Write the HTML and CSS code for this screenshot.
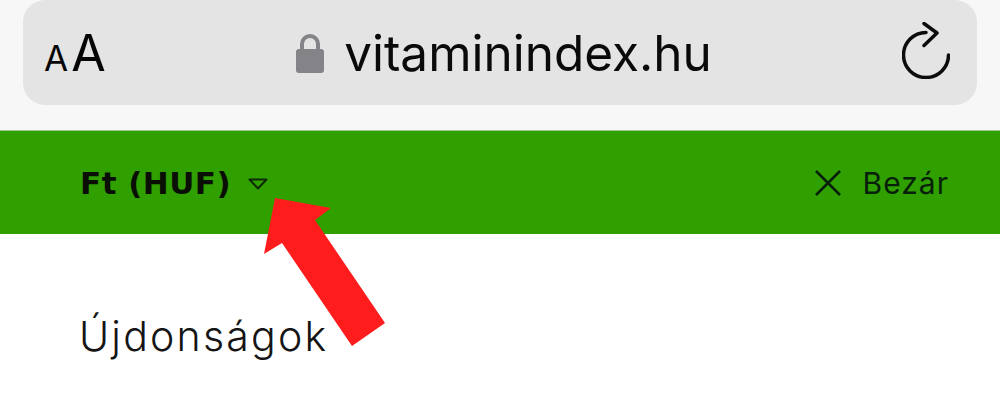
FILE: index.html
```html
<!DOCTYPE html>
<html lang="hu">
<head>
<meta charset="utf-8">
<title>vitaminindex.hu</title>
<link rel="stylesheet" href="styles.css">
</head>
<body>
<header class="browser">
  <div class="address">
    <div class="aa"><span class="aa-small">A</span><span class="aa-big">A</span></div>
    <div class="url">
      <svg class="lock" width="28" height="40" viewBox="0 0 28 40"><path class="lock-shackle" d="M6 18V11a8 8 0 0 1 16 0V18"/><rect class="lock-body" x="0" y="16" width="28" height="24" rx="3"/></svg>
      <span class="url-text">vitaminindex.hu</span>
    </div>
    <svg class="reload" width="48" height="57" viewBox="0 0 48 57"><path class="reload-stroke" d="M24 10.500A22.500 22.500 0 1 0 46.500 33M22 1.500L35 11 22 23.500"/></svg>
  </div>
</header>
<section class="bar">
  <div class="currency">
    <span class="currency-text">Ft (HUF)</span>
    <svg class="caret" width="20" height="12" viewBox="0 0 20 12"><path class="caret-stroke" d="M1.500 1.500H18.500L10 10.500Z"/></svg>
  </div>
  <div class="close">
    <svg class="close-x" width="26" height="26" viewBox="0 0 26 26"><path class="close-stroke" d="M1 1L25 25M25 1L1 25"/></svg>
    <span class="close-text">Bezár</span>
  </div>
</section>
<main class="menu">
  <div class="menu-item">Újdonságok</div>
</main>
<svg class="arrow" width="1000" height="400" viewBox="0 0 1000 400"><path class="arrow-fill" d="M275 198L331 208 315 220 385 323 352 346 282 243 264 254Z"/></svg>
</body>
</html>
```
FILE: styles.css
```css
* { box-sizing: border-box; }
html, body { margin: 0; padding: 0; }
body { width: 1000px; height: 400px; overflow: hidden; background: #fff; position: relative; font-family: "Inter", "Liberation Sans", sans-serif; color: #000; }
.browser { height: 131px; background: #f6f7f6; padding: 0 23px 25px 23px; border-bottom: 1px solid #9fc58c; }
.address { height: 105px; background: #e3e4e3; border-radius: 22px; display: flex; align-items: center; padding: 0 27px 0 21px; justify-content: space-between; }
.aa { display: flex; align-items: baseline; color: #060606; width: 62px; margin-top: 6px; }
.aa-small { font-size: 35px; line-height: 50px; }
.aa-big { font-size: 50px; line-height: 50px; margin-left: 3px; }
.url { display: flex; align-items: center; gap: 20px; margin-top: 2px; }
.lock { display: block; margin-top: -2px; }
.lock-shackle { fill: none; stroke: #838388; stroke-width: 4; }
.lock-body { fill: #838388; }
.url-text { font-size: 49.500px; color: #0a0a0a; line-height: 1; }
.reload { display: block; margin-bottom: 4px; }
.reload-stroke { fill: none; stroke: #0c0c0c; stroke-width: 3.500; stroke-linecap: round; stroke-linejoin: round; }
.bar { height: 103px; background: #2fa000; display: flex; align-items: center; justify-content: space-between; padding: 0 52px 0 80px; }
.currency { display: flex; align-items: center; gap: 17px; }
.currency-text { font-family: "DejaVu Sans", sans-serif; font-weight: 700; font-size: 31px; letter-spacing: 0.450px; color: #0a0f05; }
.caret { display: block; margin-top: 3px; }
.caret-stroke { fill: none; stroke: #0d2a05; stroke-width: 2; stroke-linejoin: round; }
.close { display: flex; align-items: center; gap: 22px; }
.close-x { display: block; }
.close-stroke { fill: none; stroke: #07200a; stroke-width: 2.500; }
.close-text { font-size: 30px; letter-spacing: 1px; margin-right: -1px; color: #07200a; }
.menu { padding: 79px 0 0 79px; }
.menu-item { font-size: 41px; letter-spacing: 2.200px; font-weight: 300; line-height: 46px; color: #141414; }
.arrow { position: absolute; left: 0; top: 0; pointer-events: none; }
.arrow-fill { fill: #ff1c1c; }
```
